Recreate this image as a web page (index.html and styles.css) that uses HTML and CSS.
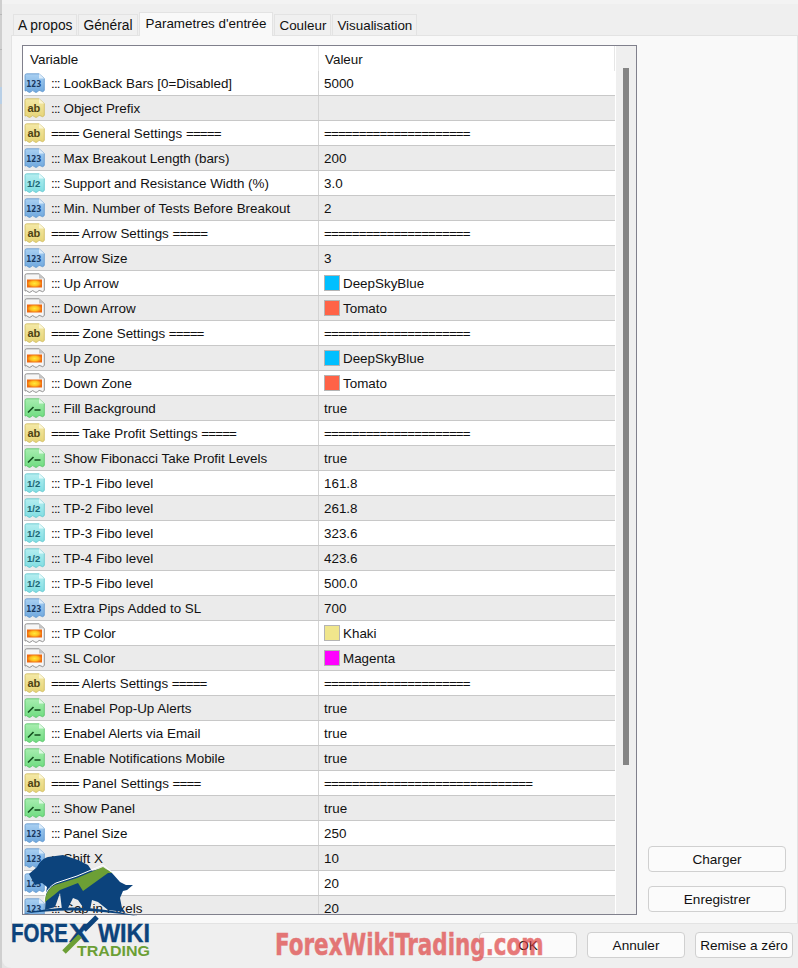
FILE: index.html
```html
<!DOCTYPE html>
<html lang="fr">
<head>
<meta charset="utf-8">
<title>Parametres d'entrée</title>
<link rel="stylesheet" href="styles.css">
</head>
<body>
<svg class="defs" width="0" height="0" aria-hidden="true">
  <defs>
    <linearGradient id="g-num" x1="0" y1="0" x2="0" y2="1"><stop offset="0" stop-color="#a9d0f2"/><stop offset="1" stop-color="#6fa8de"/></linearGradient>
    <linearGradient id="g-ab" x1="0" y1="0" x2="0" y2="1"><stop offset="0" stop-color="#f4e9a6"/><stop offset="1" stop-color="#e6d477"/></linearGradient>
    <linearGradient id="g-half" x1="0" y1="0" x2="0" y2="1"><stop offset="0" stop-color="#b5eef0"/><stop offset="1" stop-color="#80dde2"/></linearGradient>
    <linearGradient id="g-bool" x1="0" y1="0" x2="0" y2="1"><stop offset="0" stop-color="#a8eeb0"/><stop offset="1" stop-color="#6fdc80"/></linearGradient>
    <radialGradient id="g-col"><stop offset="0" stop-color="#ffe83c"/><stop offset="0.55" stop-color="#ffc21f"/><stop offset="1" stop-color="#ef6a10"/></radialGradient>
    <path id="doc" d="M1 2.5Q1 .8 2.8 .8H15L20.3 5.5V17.5Q18.7 19.7 17 18Q15 16.5 13.5 18.7Q12 20.2 10.5 18.7Q8.5 16.5 7 18.7Q5.5 20.2 4 18.7Q2.6 17 1 18Z"/>
    <path id="fold" d="M15 .8V5.5H20.3Z"/>
    <symbol id="i-num" viewBox="0 0 21 21"><use href="#doc" fill="url(#g-num)" stroke="#5d94cc" stroke-width=".8"/><use href="#fold" fill="#dcecfa"/><text x="2.2" y="14.2" class="ico-num">123</text></symbol>
    <symbol id="i-ab" viewBox="0 0 21 21"><use href="#doc" fill="url(#g-ab)" stroke="#cdb95c" stroke-width=".8"/><use href="#fold" fill="#fbf6d4"/><text x="3.5" y="14" class="ico-ab">ab</text></symbol>
    <symbol id="i-half" viewBox="0 0 21 21"><use href="#doc" fill="url(#g-half)" stroke="#5dc4cc" stroke-width=".8"/><use href="#fold" fill="#e2fafb"/><text x="3" y="13.8" class="ico-half">1/2</text></symbol>
    <symbol id="i-bool" viewBox="0 0 21 21"><use href="#doc" fill="url(#g-bool)" stroke="#55c066" stroke-width=".8"/><use href="#fold" fill="#dffae3"/><path d="M4 14.5L9.5 9M10.5 12H16.5" fill="none" stroke="#14501f" stroke-width="1.7"/></symbol>
    <symbol id="i-col" viewBox="0 0 21 21"><use href="#doc" fill="#f6f6f6" stroke="#858585" stroke-width=".9"/><use href="#fold" fill="#c4c4c4"/><rect x="3" y="6.5" width="15" height="8" fill="url(#g-col)"/></symbol>
  </defs>
</svg>

<div class="sliver"></div>
<main class="dialog">
  <nav class="tabs">
    <span class="tab loose">A propos</span>
    <span class="tab loose">Général</span>
    <span class="tab active">Parametres d'entrée</span>
    <span class="tab">Couleur</span>
    <span class="tab">Visualisation</span>
  </nav>

  <section class="panel">
    <div class="grid">
      <div class="rows">
        <div class="head"><span class="hname">Variable</span><span class="hval">Valeur</span></div>

        <div class="row"><span class="name"><svg class="ico"><use href="#i-num"/></svg><span><span class="dots">:::</span> LookBack Bars [0=Disabled]</span></span><span class="val">5000</span></div>
        <div class="row"><span class="name"><svg class="ico"><use href="#i-ab"/></svg><span><span class="dots">:::</span> Object Prefix</span></span><span class="val"></span></div>
        <div class="row"><span class="name"><svg class="ico"><use href="#i-ab"/></svg><span><span class="eq">====</span> General Settings <span class="eq">=====</span></span></span><span class="val eq">=====================</span></div>
        <div class="row"><span class="name"><svg class="ico"><use href="#i-num"/></svg><span><span class="dots">:::</span> Max Breakout Length (bars)</span></span><span class="val">200</span></div>
        <div class="row"><span class="name"><svg class="ico"><use href="#i-half"/></svg><span><span class="dots">:::</span> Support and Resistance Width (%)</span></span><span class="val">3.0</span></div>
        <div class="row"><span class="name"><svg class="ico"><use href="#i-num"/></svg><span><span class="dots">:::</span> Min. Number of Tests Before Breakout</span></span><span class="val">2</span></div>
        <div class="row"><span class="name"><svg class="ico"><use href="#i-ab"/></svg><span><span class="eq">====</span> Arrow Settings <span class="eq">=====</span></span></span><span class="val eq">=====================</span></div>
        <div class="row"><span class="name"><svg class="ico"><use href="#i-num"/></svg><span><span class="dots">:::</span> Arrow Size</span></span><span class="val">3</span></div>
        <div class="row"><span class="name"><svg class="ico"><use href="#i-col"/></svg><span><span class="dots">:::</span> Up Arrow</span></span><span class="val"><i class="swatch sky"></i>DeepSkyBlue</span></div>
        <div class="row"><span class="name"><svg class="ico"><use href="#i-col"/></svg><span><span class="dots">:::</span> Down Arrow</span></span><span class="val"><i class="swatch tomato"></i>Tomato</span></div>
        <div class="row"><span class="name"><svg class="ico"><use href="#i-ab"/></svg><span><span class="eq">====</span> Zone Settings <span class="eq">=====</span></span></span><span class="val eq">=====================</span></div>
        <div class="row"><span class="name"><svg class="ico"><use href="#i-col"/></svg><span><span class="dots">:::</span> Up Zone</span></span><span class="val"><i class="swatch sky"></i>DeepSkyBlue</span></div>
        <div class="row"><span class="name"><svg class="ico"><use href="#i-col"/></svg><span><span class="dots">:::</span> Down Zone</span></span><span class="val"><i class="swatch tomato"></i>Tomato</span></div>
        <div class="row"><span class="name"><svg class="ico"><use href="#i-bool"/></svg><span><span class="dots">:::</span> Fill Background</span></span><span class="val">true</span></div>
        <div class="row"><span class="name"><svg class="ico"><use href="#i-ab"/></svg><span><span class="eq">====</span> Take Profit Settings <span class="eq">=====</span></span></span><span class="val eq">=====================</span></div>
        <div class="row"><span class="name"><svg class="ico"><use href="#i-bool"/></svg><span><span class="dots">:::</span> Show Fibonacci Take Profit Levels</span></span><span class="val">true</span></div>
        <div class="row"><span class="name"><svg class="ico"><use href="#i-half"/></svg><span><span class="dots">:::</span> TP-1 Fibo level</span></span><span class="val">161.8</span></div>
        <div class="row"><span class="name"><svg class="ico"><use href="#i-half"/></svg><span><span class="dots">:::</span> TP-2 Fibo level</span></span><span class="val">261.8</span></div>
        <div class="row"><span class="name"><svg class="ico"><use href="#i-half"/></svg><span><span class="dots">:::</span> TP-3 Fibo level</span></span><span class="val">323.6</span></div>
        <div class="row"><span class="name"><svg class="ico"><use href="#i-half"/></svg><span><span class="dots">:::</span> TP-4 Fibo level</span></span><span class="val">423.6</span></div>
        <div class="row"><span class="name"><svg class="ico"><use href="#i-half"/></svg><span><span class="dots">:::</span> TP-5 Fibo level</span></span><span class="val">500.0</span></div>
        <div class="row"><span class="name"><svg class="ico"><use href="#i-num"/></svg><span><span class="dots">:::</span> Extra Pips Added to SL</span></span><span class="val">700</span></div>
        <div class="row"><span class="name"><svg class="ico"><use href="#i-col"/></svg><span><span class="dots">:::</span> TP Color</span></span><span class="val"><i class="swatch khaki"></i>Khaki</span></div>
        <div class="row"><span class="name"><svg class="ico"><use href="#i-col"/></svg><span><span class="dots">:::</span> SL Color</span></span><span class="val"><i class="swatch magenta"></i>Magenta</span></div>
        <div class="row"><span class="name"><svg class="ico"><use href="#i-ab"/></svg><span><span class="eq">====</span> Alerts Settings <span class="eq">=====</span></span></span><span class="val eq">=====================</span></div>
        <div class="row"><span class="name"><svg class="ico"><use href="#i-bool"/></svg><span><span class="dots">:::</span> Enabel Pop-Up Alerts</span></span><span class="val">true</span></div>
        <div class="row"><span class="name"><svg class="ico"><use href="#i-bool"/></svg><span><span class="dots">:::</span> Enabel Alerts via Email</span></span><span class="val">true</span></div>
        <div class="row"><span class="name"><svg class="ico"><use href="#i-bool"/></svg><span><span class="dots">:::</span> Enable Notifications Mobile</span></span><span class="val">true</span></div>
        <div class="row"><span class="name"><svg class="ico"><use href="#i-ab"/></svg><span><span class="eq">====</span> Panel Settings <span class="eq">====</span></span></span><span class="val eq">==============================</span></div>
        <div class="row"><span class="name"><svg class="ico"><use href="#i-bool"/></svg><span><span class="dots">:::</span> Show Panel</span></span><span class="val">true</span></div>
        <div class="row"><span class="name"><svg class="ico"><use href="#i-num"/></svg><span><span class="dots">:::</span> Panel Size</span></span><span class="val">250</span></div>
        <div class="row"><span class="name"><svg class="ico"><use href="#i-num"/></svg><span><span class="dots">:::</span> Shift X</span></span><span class="val">10</span></div>
        <div class="row"><span class="name"><svg class="ico"><use href="#i-num"/></svg><span><span class="dots">:::</span> Shift Y</span></span><span class="val">20</span></div>
        <div class="row"><span class="name"><svg class="ico"><use href="#i-num"/></svg><span><span class="dots">:::</span> Gap in Pixels</span></span><span class="val">20</span></div>
      </div>
      <div class="scrollbar"><div class="thumb"></div></div>
    </div>

    <aside class="side">
      <button class="btn wide">Charger</button>
      <button class="btn wide">Enregistrer</button>
    </aside>
  </section>

  <footer class="actions">
    <button class="btn">OK</button>
    <button class="btn">Annuler</button>
    <button class="btn">Remise a zéro</button>
  </footer>

  <svg class="logo" viewBox="0 850 160 118" width="160" height="118">
    <path class="bull" d="M29 874C32 871 35 869 37 867C40 861 44 858 48 857L63 855L78 860L88 865L92 871L103 868L112 873L120 882L126 885L133 885L127 890L123 891L120 898L122 908L125 912L108 910L98 902L92 900L90 910L85 910L78 900L73 898L68 908L62 910L60 893L55 907L45 910L46 893L47 887L42 883L35 885Z"/>
    <path class="arc" d="M23 914Q72 900 138 916Q72 906 23 914Z"/>
    <path class="arrow-edge" d="M44 901C45 892 50 886 56 883L77 876L103 865L113 873"/>
    <path class="arrow" d="M45 902C45 893 50 887 55 885L77 878L103 867L112 873L108 873L83 891L78 883L60 890L54 895Z"/>
    <text class="lg-blue" x="11" y="942" textLength="57" lengthAdjust="spacingAndGlyphs">FORE</text>
    <text class="lg-blue" x="69" y="942" textLength="20" lengthAdjust="spacingAndGlyphs">X</text>
    <text class="lg-blue" x="98" y="942" textLength="52" lengthAdjust="spacingAndGlyphs">WIKI</text>
    <path class="x-blue" d="M97 917L84 930"/>
    <path class="x-green" d="M80 936L64 952"/>
    <text class="lg-green" x="77" y="956" textLength="73" lengthAdjust="spacingAndGlyphs">TRADING</text>
  </svg>

  <div class="watermark">ForexWikiTrading.com</div>
</main>
</body>
</html>
```

FILE: styles.css
```css
* { box-sizing: border-box; }

html, body { margin: 0; height: 968px; overflow: hidden; }

body {
  display: flex;
  background: #e4e4e4;
  font-family: "Segoe UI", "Liberation Sans", Arial, sans-serif;
  font-size: 13.4px;
  color: #111;
}

.defs { position: absolute; }

.sliver {
  flex: 0 0 2px;
  background:
    linear-gradient(#b8b8b8, #b8b8b8) 0 14px / 2px 1px no-repeat,
    linear-gradient(#b8b8b8, #b8b8b8) 0 49px / 2px 1px no-repeat,
    linear-gradient(#b8cfe6, #b8cfe6) 0 87px / 2px 17px no-repeat,
    #cfcfcf;
}

.dialog {
  position: relative;
  flex: 1;
  height: 968px;
  display: flex;
  flex-direction: column;
  padding-top: 12px;
  background: #efefef;
  border-top: 4px solid #f3f3f3;
  border-bottom-left-radius: 9px;
}

/* tabs */
.tabs {
  display: flex;
  align-items: flex-end;
  height: 19px;
  margin-left: 11px;
  position: relative;
  z-index: 1;
}

.tab {
  height: 21px;
  padding: 0 4px;
  margin-right: 1px;
  line-height: 22px;
  background: #f0f0f0;
  border: 1px solid #e3e3e3;
  border-bottom: 0;
  white-space: nowrap;
}

.tab.loose { font-size: 13.8px; }

.tab.active {
  height: 24px;
  margin: 0 1px -1px 0;
  padding: 0 6px;
  line-height: 22px;
  background: #f9f9f9;
}

/* panel */
.panel {
  display: flex;
  height: 889px;
  margin-left: 9px;
  padding: 9px 0 11px 10px;
  background: #f9f9f9;
  border: 1px solid #e3e3e3;
}

.grid {
  display: flex;
  flex: 0 0 615px;
  height: 870px;
  padding: 0 0 0 1px;
  background: #fff;
  border: 1px solid #80808c;
  overflow: hidden;
}

.rows { flex: 0 0 591px; height: 868px; overflow: hidden; }

.head {
  display: flex;
  height: 25px;
  line-height: 28px;
}
.hname {
  flex: 0 0 295px;
  padding-left: 6px;
  border-right: 1px solid #e6e6e6;
}
.hval {
  flex: 1;
  padding-left: 6px;
  border-right: 1px solid #e6e6e6;
}

.row {
  display: flex;
  height: 25px;
  line-height: 24px;
  border-bottom: 1px solid #c8c8c8;
  background: #fff;
}
.row:nth-child(odd) { background: #ebebeb; }

.name {
  display: flex;
  align-items: center;
  flex: 0 0 295px;
  padding-top: 2px;
  border-right: 1px solid #d4d4d4;
  white-space: nowrap;
}
.val {
  display: flex;
  align-items: center;
  flex: 1;
  padding: 2px 0 0 5px;
  white-space: nowrap;
}

.dots { letter-spacing: -.8px; }
.eq { letter-spacing: -.88px; }

.ico { flex: 0 0 21px; width: 21px; height: 21px; margin: -2px 6px 0 0; }

.ico-num { font: bold 8.4px "DejaVu Sans Mono", monospace; fill: #17375e; }
.ico-ab { font: bold 11px "Liberation Sans", sans-serif; fill: #4e4414; }
.ico-half { font: bold 9.5px "Liberation Sans", sans-serif; fill: #1a6472; }

.swatch {
  width: 16px;
  height: 16px;
  margin: -2px 3px 0 0;
  border: 1px solid #b4b4b4;
}
.sky { background: #00bfff; }
.tomato { background: #ff6347; }
.khaki { background: #f0e68c; }
.magenta { background: #ff00ff; }

/* scrollbar */
.scrollbar {
  flex: 1;
  margin-left: 1px;
  background: #efefef;
  padding: 22px 0 0 7px;
}
.thumb { width: 6px; height: 697px; background: #858585; }

/* right column */
.side {
  display: flex;
  flex-direction: column;
  justify-content: flex-end;
  gap: 14px;
  flex: 0 0 138px;
  margin-left: 11px;
}

.btn {
  width: 98px;
  height: 26px;
  padding: 0;
  font-family: inherit;
  font-size: 13.6px;
  color: #111;
  background: #fbfbfb;
  border: 1px solid #d0d0d0;
  border-radius: 4px;
}
.btn.wide { width: 138px; }

/* footer */
.actions {
  display: flex;
  justify-content: flex-end;
  gap: 10px;
  padding: 8px 5px 0 0;
}

/* brand overlays */
.logo { position: absolute; left: -2px; top: 846px; pointer-events: none; }
.bull { fill: #0c437c; }
.arc { fill: #0c437c; }
.arrow { fill: #6c9f35; }
.arrow-edge { fill: none; stroke: #fff; stroke-width: 1; }
.lg-blue { font: bold 25px "Liberation Sans", sans-serif; fill: #0c437c; stroke: #0c437c; stroke-width: .4; }
.lg-green { font: bold 15px "Liberation Sans", sans-serif; fill: #6c9f35; }
.x-blue { fill: none; stroke: #0c437c; stroke-width: 5; }
.x-green { fill: none; stroke: #6c9f35; stroke-width: 5; }

.watermark {
  position: absolute;
  left: 273px;
  top: 922px;
  font: bold 31px "DejaVu Sans Condensed", "Liberation Sans", sans-serif;
  line-height: 36px;
  color: #de3c3c;
  opacity: .68;
  white-space: nowrap;
  pointer-events: none;
  transform: scaleX(.77);
  transform-origin: left top;
  -webkit-text-stroke: .5px #de3c3c;
}
```
